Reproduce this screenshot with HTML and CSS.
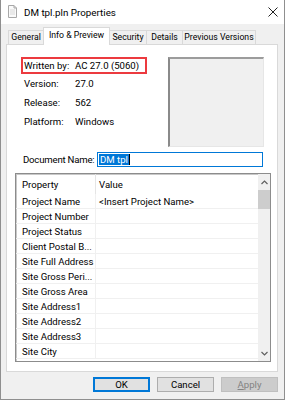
FILE: index.html
```html
<!DOCTYPE html>
<html>
<head>
<meta charset="utf-8">
<link rel="stylesheet" href="styles.css">
</head>
<body>
<div class="window">
  <div class="titlebar">
    <svg class="doc-icon" width="9" height="13" viewBox="0 0 9 13">
      <path d="M0.5 0.5 H6 L8.5 3 V12.5 H0.5 Z" fill="#fafafa" stroke="#a8a8a8"/>
      <path d="M6 0.5 V3 H8.5" fill="none" stroke="#a8a8a8"/>
      <path d="M2 5 H7 M2 7 H7 M2 9 H7" stroke="#d8d8d8"/>
    </svg>
    <span class="title">DM tpl.pln Properties</span>
    <svg class="close" width="10" height="10" viewBox="0 0 10 10">
      <path d="M0.5 0.5 L9.5 9.5 M9.5 0.5 L0.5 9.5" stroke="#222" stroke-width="1"/>
    </svg>
  </div>
  <div class="client">
    <div class="tabs">
      <div class="tab t-general">General</div>
      <div class="tab active t-info">Info &amp; Preview</div>
      <div class="tab t-security">Security</div>
      <div class="tab t-details">Details</div>
      <div class="tab t-prev">Previous Versions</div>
    </div>
    <div class="panel">
      <div class="info">
        <div class="facts">
          <div class="fact highlight"><span class="lbl">Written by:</span><span>AC 27.0 (5060)</span></div>
          <div class="fact"><span class="lbl">Version:</span><span>27.0</span></div>
          <div class="fact"><span class="lbl">Release:</span><span>562</span></div>
          <div class="fact"><span class="lbl">Platform:</span><span>Windows</span></div>
        </div>
        <div class="preview"></div>
      </div>
      <div class="docname">
        <span class="docname-label">Document Name:</span>
        <div class="input"><span class="sel">DM tpl</span><span class="caret"></span></div>
      </div>
      <div class="list">
        <div class="list-body">
          <div class="row head"><div class="c1">Property</div><div class="c2">Value</div></div>
          <div class="row"><div class="c1">Project Name</div><div class="c2">&lt;Insert Project Name&gt;</div></div>
          <div class="row"><div class="c1">Project Number</div><div class="c2"></div></div>
          <div class="row"><div class="c1">Project Status</div><div class="c2"></div></div>
          <div class="row"><div class="c1">Client Postal B...</div><div class="c2"></div></div>
          <div class="row"><div class="c1">Site Full Address</div><div class="c2"></div></div>
          <div class="row"><div class="c1">Site Gross Peri...</div><div class="c2"></div></div>
          <div class="row"><div class="c1">Site Gross Area</div><div class="c2"></div></div>
          <div class="row"><div class="c1">Site Address1</div><div class="c2"></div></div>
          <div class="row"><div class="c1">Site Address2</div><div class="c2"></div></div>
          <div class="row"><div class="c1">Site Address3</div><div class="c2"></div></div>
          <div class="row"><div class="c1">Site City</div><div class="c2"></div></div>
        </div>
        <div class="scrollbar">
          <div class="arrow">
            <svg width="7" height="5" viewBox="0 0 7 5"><path d="M0.5 4 L3.5 1 L6.5 4" fill="none" stroke="#606060" stroke-width="1.2"/></svg>
          </div>
          <div class="thumb"></div>
          <div class="track"></div>
          <div class="arrow">
            <svg width="7" height="5" viewBox="0 0 7 5"><path d="M0.5 1 L3.5 4 L6.5 1" fill="none" stroke="#606060" stroke-width="1.2"/></svg>
          </div>
        </div>
      </div>
    </div>
    <div class="buttons">
      <div class="btn default">OK</div>
      <div class="btn">Cancel</div>
      <div class="btn disabled"><u>A</u>pply</div>
    </div>
  </div>
</div>
</body>
</html>
```

FILE: styles.css
```css
html, body {
  margin: 0;
  padding: 0;
  background: #ffffff;
}
body {
  font-family: Roboto, "Noto Sans", sans-serif;
  font-size: 9.6px;
  color: #000;
  white-space: nowrap;
}
.window {
  width: 285px;
  height: 400px;
  box-sizing: border-box;
  border: 1px solid #8f8f8f;
  border-top: none;
  display: flex;
  flex-direction: column;
  background: #f0f0f0;
}
.titlebar {
  height: 24px;
  flex: none;
  background: #fff;
  display: flex;
  align-items: center;
}
.doc-icon {
  margin-left: 7px;
  margin-top: -1px;
}
.title {
  margin-left: 7px;
  font-size: 9.8px;
  color: #000;
}
.close {
  margin-left: auto;
  margin-right: 6px;
}
.client {
  flex: 1;
  padding: 3px 6px 0 5px;
  display: flex;
  flex-direction: column;
}
.tabs {
  display: flex;
  align-items: flex-end;
  height: 17px;
  padding-left: 2px;
  position: relative;
  z-index: 1;
}
.tab {
  height: 14px;
  box-sizing: border-box;
  border: 1px solid #d9d9d9;
  border-bottom: none;
  margin-right: -1px;
  display: flex;
  align-items: center;
  justify-content: center;
  background: #f0f0f0;
  line-height: 1;
  font-size: 8.7px;
}
.t-general { width: 36px; }
.t-info { width: 67px; }
.t-security { width: 38px; }
.t-details { width: 37px; }
.t-prev { width: 74px; }
.tab.active {
  height: 18px;
  margin-bottom: -1px;
  padding-bottom: 2px;
  background: #fff;
  position: relative;
  z-index: 2;
}
.panel {
  height: 328px;
  box-sizing: border-box;
  border: 1px solid #d9d9d9;
  background: #fff;
  display: flex;
  flex-direction: column;
}
.info {
  display: flex;
  margin-top: 12px;
}
.facts {
  margin-left: 14px;
  width: 126px;
}
.fact {
  display: flex;
  align-items: center;
  height: 19px;
  padding-left: 3px;
}
.fact.highlight {
  height: 17px;
  box-sizing: border-box;
  border: 2px solid #ec3a3f;
  padding-left: 1px;
}
.lbl {
  width: 51px;
  flex: none;
}
.preview {
  margin-left: 21px;
  width: 96px;
  height: 90px;
  box-sizing: border-box;
  background: #f0f0f0;
  border-left: 2px solid #8a8a8a;
  border-top: 2px solid #9c9c9c;
  border-right: 1px solid #e6e6e6;
  border-bottom: 1px solid #e6e6e6;
}
.docname {
  display: flex;
  align-items: center;
  margin-top: 5px;
  margin-left: 16px;
}
.docname-label {
  width: 74px;
  flex: none;
  letter-spacing: -0.2px;
}
.input {
  width: 166px;
  height: 15px;
  box-sizing: border-box;
  border: 1px solid #0078d7;
  display: flex;
  align-items: center;
  padding-left: 1px;
}
.sel {
  background: #0078d7;
  color: #fff;
  line-height: 11px;
  height: 11px;
  padding: 0 1px;
}
.caret {
  width: 1px;
  height: 11px;
  background: #000;
}
.list {
  margin-top: 6px;
  margin-left: 8px;
  width: 256px;
  height: 189px;
  box-sizing: border-box;
  border: 1px solid #8c8c8c;
  box-shadow: inset 1px 1px 0 #c8c8c8;
  display: flex;
  overflow: hidden;
}
.list-body {
  flex: 1;
  display: flex;
  flex-direction: column;
}
.row {
  display: flex;
  height: 15px;
  flex: none;
  box-sizing: border-box;
  border-bottom: 1px solid #f0f0f0;
  align-items: center;
}
.row.head {
  height: 20px;
  border-bottom: none;
}
.c1 {
  width: 80px;
  flex: none;
  box-sizing: border-box;
  padding-left: 6px;
  border-right: 1px solid #f0f0f0;
  height: 100%;
  display: flex;
  align-items: center;
  overflow: hidden;
}
.row.head .c1 {
  border-right-color: #e5e5e5;
}
.c2 {
  flex: 1;
  padding-left: 3px;
}
.scrollbar {
  width: 12px;
  flex: none;
  background: #f0f0f0;
  display: flex;
  flex-direction: column;
}
.arrow {
  height: 16px;
  display: flex;
  align-items: center;
  justify-content: center;
}
.thumb {
  height: 19px;
  background: #cdcdcd;
}
.track {
  flex: 1;
}
.buttons {
  display: flex;
  justify-content: flex-end;
  gap: 7px;
  margin-top: 5px;
}
.btn {
  width: 57px;
  height: 15px;
  box-sizing: border-box;
  border: 1px solid #adadad;
  background: #e1e1e1;
  display: flex;
  align-items: center;
  justify-content: center;
}
.btn.default {
  border-color: #0078d7;
  box-shadow: inset 0 0 0 1px #0078d7;
}
.btn.disabled {
  background: #cccccc;
  border-color: #bfbfbf;
  color: #838383;
}
.btn u {
  text-decoration: underline;
}
```
